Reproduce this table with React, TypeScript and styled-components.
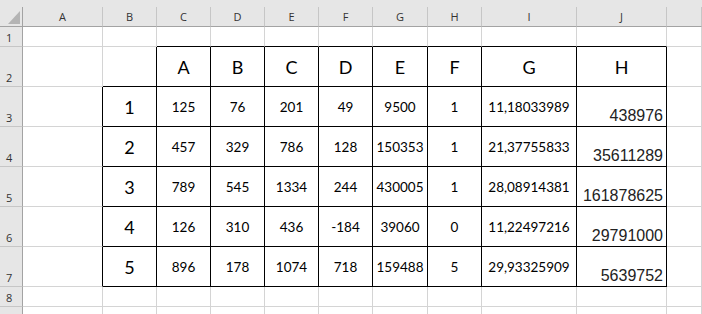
import React from "react";
import styled, { createGlobalStyle, css } from "styled-components";

const GlobalStyle = createGlobalStyle`
  html, body { margin: 0; padding: 0; background: #ffffff; overflow: hidden; }
  body { width: 702px; height: 314px; }
`;

const GRID = "#d4d4d4";
const HDR_BG = "#e6e6e6";
const HDR_SEP = "#c6c6c6";
const HDR_EDGE = "#a3a3a3";

const Sheet = styled.div`
  display: grid;
  grid-template-columns: 23px 80px 54px 54px 54px 54px 54px 55px 54px 95px 90px 1fr;
  grid-template-rows: 7px 20px 20px repeat(6, 40px) 20px 20px;
  width: 702px;
  height: 314px;
  overflow: hidden;
`;

const TopStrip = styled.div`
  grid-column: 1 / -1;
  background: ${HDR_BG};
`;

const Corner = styled.div`
  box-sizing: border-box;
  background: ${HDR_BG};
  border-right: 1px solid ${HDR_EDGE};
  border-bottom: 1px solid ${HDR_EDGE};
  display: flex;
  align-items: flex-end;
  justify-content: flex-end;
  padding: 0 2px 2px 0;
`;

const ColHeader = styled.div`
  box-sizing: border-box;
  background: ${HDR_BG};
  border-right: 1px solid ${HDR_SEP};
  border-bottom: 1px solid ${HDR_EDGE};
  font-family: "Open Sans", "Noto Sans", sans-serif;
  font-size: 11px;
  color: #333333;
  display: flex;
  align-items: center;
  justify-content: center;
  padding-bottom: 1px;
`;

const RowHeader = styled.div`
  box-sizing: border-box;
  background: ${HDR_BG};
  border-right: 1px solid ${HDR_EDGE};
  border-bottom: 1px solid ${HDR_SEP};
  font-family: "Open Sans", "Noto Sans", sans-serif;
  font-size: 11px;
  color: #333333;
  display: flex;
  align-items: flex-end;
  justify-content: flex-start;
  padding: 0 0 1px 6px;
`;

type Kind = "data" | "big" | "arial" | "empty";

const Cell = styled.div<{ $right: string; $bottom: string; $kind: Kind }>`
  box-sizing: border-box;
  border-right: 1px solid ${(p) => p.$right};
  border-bottom: 1px solid ${(p) => p.$bottom};
  color: #000000;
  display: flex;
  white-space: nowrap;
  overflow: visible;
  ${(p) =>
    p.$kind === "data" &&
    css`
      font-family: Lato, "Liberation Sans", sans-serif;
      font-size: 13.5px;
      align-items: center;
      justify-content: center;
    `}
  ${(p) =>
    p.$kind === "big" &&
    css`
      font-family: Lato, "Liberation Sans", sans-serif;
      font-size: 18px;
      align-items: center;
      justify-content: center;
      padding-top: 1px;
    `}
  ${(p) =>
    p.$kind === "arial" &&
    css`
      font-family: "Liberation Sans", Arial, sans-serif;
      font-size: 16px;
      color: #222222;
      align-items: flex-end;
      justify-content: flex-end;
      padding: 0 3px 1px 0;
    `}
`;

const COLS = ["A", "B", "C", "D", "E", "F", "G", "H", "I", "J", ""];

const DATA: string[][] = [
  ["1", "125", "76", "201", "49", "9500", "1", "11,18033989", "438976"],
  ["2", "457", "329", "786", "128", "150353", "1", "21,37755833", "35611289"],
  ["3", "789", "545", "1334", "244", "430005", "1", "28,08914381", "161878625"],
  ["4", "126", "310", "436", "-184", "39060", "0", "11,22497216", "29791000"],
  ["5", "896", "178", "1074", "718", "159488", "5", "29,93325909", "5639752"],
];

const HEAD = ["A", "B", "C", "D", "E", "F", "G", "H"];

// column index: A=1 ... K=11 ; row index 1..9
const inTable = (r: number, c: number) =>
  (r >= 2 && r <= 7 && c >= 3 && c <= 10) || (r >= 3 && r <= 7 && c === 2);

const content = (r: number, c: number): { text: string; kind: Kind } => {
  if (r === 2 && c >= 3 && c <= 10) return { text: HEAD[c - 3], kind: "big" };
  if (r >= 3 && r <= 7) {
    const row = DATA[r - 3];
    if (c === 2) return { text: row[0], kind: "big" };
    if (c >= 3 && c <= 9) return { text: row[c - 2], kind: "data" };
    if (c === 10) return { text: row[8], kind: "arial" };
  }
  return { text: "", kind: "empty" };
};

const CornerMark = () => (
  <svg width="12" height="13" viewBox="0 0 12 13">
    <polygon points="12,0 12,13 0,13" fill="#b4b4b4" />
  </svg>
);

export default function App() {
  const rows = [1, 2, 3, 4, 5, 6, 7, 8, 9];
  return (
    <>
      <GlobalStyle />
      <Sheet>
        <TopStrip />
        <Corner>
          <CornerMark />
        </Corner>
        {COLS.map((c, i) => (
          <ColHeader key={"h" + i}>{c}</ColHeader>
        ))}
        {rows.map((r) => (
          <React.Fragment key={"r" + r}>
            <RowHeader>{r}</RowHeader>
            {COLS.map((_, i) => {
              const c = i + 1;
              const black = "#000000";
              const right = inTable(r, c) || inTable(r, c + 1) ? black : GRID;
              const bottom = inTable(r, c) || inTable(r + 1, c) ? black : GRID;
              const { text, kind } = content(r, c);
              return (
                <Cell key={r + "-" + c} $right={right} $bottom={bottom} $kind={kind}>
                  {text}
                </Cell>
              );
            })}
          </React.Fragment>
        ))}
      </Sheet>
    </>
  );
}
